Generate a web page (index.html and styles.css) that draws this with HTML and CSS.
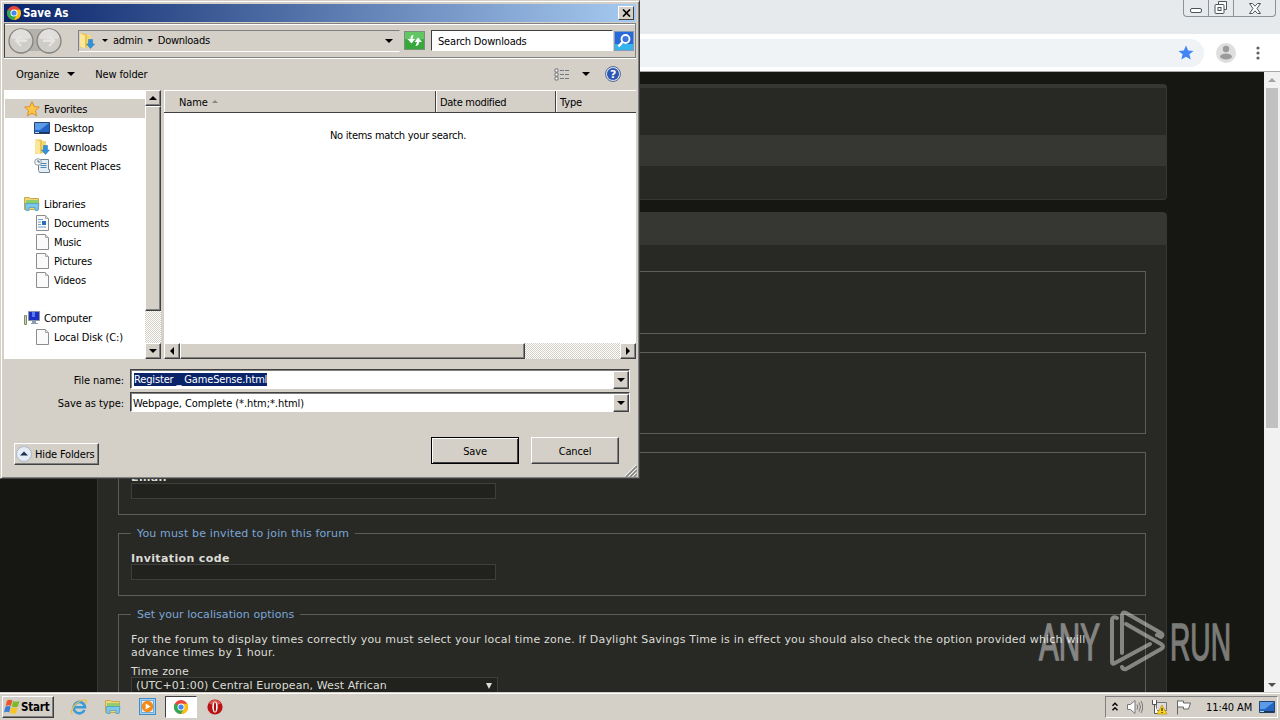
FILE: index.html
```html
<!DOCTYPE html>
<html lang="en">
<head>
  <meta charset="UTF-8">
  <title>Register / GameSense</title>
  <link rel="stylesheet" href="styles.css">
</head>
<body>
  <svg class="defs" width="0" height="0">
    <symbol id="chrome" viewBox="0 0 16 16">
      <circle cx="8" cy="8" r="7" fill="#e9453a"/>
      <path d="M8 8 1.9 4.6A7 7 0 0 0 8 15l3.2-5.5z" fill="#2da94f"/>
      <path d="M8 4.8h6.2A7 7 0 0 1 8 15l3-5.4z" fill="#fdc10a"/>
      <circle cx="8" cy="8" r="3.5" fill="#fff"/>
      <circle cx="8" cy="8" r="2.6" fill="#4387f3"/>
    </symbol>
    <symbol id="downloads" viewBox="0 0 16 16">
      <path d="M1 .5h6l2 2v12H1z" fill="#e8c656"/>
      <path d="M1 .5l5 2V15.500L1 13.500z" fill="#fbe797"/>
      <path d="M8 2h4v12H8z" fill="#f3d774"/>
      <path d="M9.500 6.500h4V11h2L11.500 15.500 7.500 11h2z" fill="#2f93dd" stroke="#2273b5" stroke-width=".5"/>
    </symbol>
    <symbol id="page" viewBox="0 0 16 16">
      <path d="M2.500.500h9l3 3v12h-12z" fill="#fafafa" stroke="#8c8c8c"/>
      <path d="M11.500.500v3h3" fill="#ddd" stroke="#aaa"/>
    </symbol>
    <symbol id="library" viewBox="0 0 16 16">
      <path d="M.5 1.500h5l1 1h8v11H.5z" fill="#f2d675" stroke="#c9a94b"/>
      <path d="M2 4h12v4H2z" fill="#8fce6b"/>
      <path d="M1 7.500h14l-1 7h-3v-3H5v3H2z" fill="#7cc7ea" stroke="#4698c4" stroke-width=".7"/>
    </symbol>
    <symbol id="screen" viewBox="0 0 16 16">
      <path d="M.5 2.500h15v11H.5z" fill="#2265c4" stroke="#26456f"/>
      <path d="M1 3h14L6 10H1z" fill="#5a9bea"/>
      <path d="M1 12h14v1.500H1z" fill="#1d3555"/>
      <path d="M1 12h4v1H1z" fill="#a8d8ea"/>
    </symbol>
  </svg>

  <div class="desktop">
    <div class="browser">
      <div class="tabstrip">
        <div class="win-buttons">
          <span><svg width="12" height="5" viewBox="0 0 12 5"><rect x=".5" y=".5" width="11" height="4" rx="1.500" class="line"/></svg></span>
          <span><svg width="14" height="14" viewBox="0 0 14 14"><path d="M4.500 3V.5h8v8H10" class="line"/><rect x="1" y="3.500" width="9" height="9" rx="1" class="line"/><rect x="4" y="6.500" width="3" height="3" class="line"/></svg></span>
          <span class="wide"><svg width="12" height="11" viewBox="0 0 12 11"><path d="M.5.500h3L6 3.200 8.500.500h3L8 5.500l3.500 5h-3L6 7.800l-2.500 2.700h-3L4 5.500z" class="line"/></svg></span>
        </div>
      </div>
      <div class="toolbar">
        <div class="omnibox">
          <svg width="16" height="16" viewBox="0 0 16 16"><path d="M8 .5l2.200 5 5.300.4-4.100 3.400 1.300 5.300L8 11.800l-4.700 2.800 1.300-5.300L.5 5.900l5.300-.4z" fill="#4285f4"/></svg>
        </div>
        <svg width="20" height="20" viewBox="0 0 20 20"><circle cx="10" cy="10" r="10" fill="#dedede"/><circle cx="10" cy="6" r="3.200" fill="#9b9b9b"/><ellipse cx="10" cy="13.500" rx="6" ry="3" fill="#9b9b9b"/></svg>
        <svg width="4" height="14" viewBox="0 0 4 14" fill="#5f6368"><circle cx="2" cy="2" r="1.600"/><circle cx="2" cy="7" r="1.600"/><circle cx="2" cy="12" r="1.600"/></svg>
      </div>
      <div class="viewport">
        <div class="page">
          <div class="panel top-panel">
            <div class="nav-strip"></div>
          </div>
          <div class="panel form-panel">
            <div class="panel-head"></div>
            <div class="fields">
              <fieldset></fieldset>
              <fieldset class="tall"></fieldset>
              <fieldset>
                <label class="req">Email<input type="text"></label>
              </fieldset>
              <fieldset>
                <legend>You must be invited to join this forum</legend>
                <label class="req">Invitation code<input type="text"></label>
              </fieldset>
              <fieldset class="last">
                <legend class="tight">Set your localisation options</legend>
                <p>For the forum to display times correctly you must select your local time zone. If Daylight Savings Time is in effect you should also check the option provided which will<br>advance times by 1 hour.</p>
                <div class="tz-label">Time zone</div>
                <div class="select"><span>(UTC+01:00) Central European, West African</span><i></i></div>
              </fieldset>
            </div>
          </div>
        </div>
        <div class="scrollbar">
          <i class="arrow-up"></i>
          <div class="thumb"></div>
          <i class="arrow-down"></i>
        </div>
      </div>
    </div>

    <div class="taskbar">
      <button class="start">
        <svg width="16" height="16" viewBox="0 0 16 16"><path d="M3 1.500c2-1.300 3.500-1 5.500 0L6.800 7C5 6 3.500 6 1.700 7z" fill="#e8572a"/><path d="M9.200 2c2 1 3.800 1 6.300 0L13.900 7.500c-2 1-4 .8-6.200-.1z" fill="#7cb82f"/><path d="M1.400 7.700c2-1 3.500-1 5.200 0L5.200 13.500C3.500 12.500 2 12.500 0 13.500z" fill="#3b7fd4"/><path d="M7.400 8.200c2 1 4 1 6.200.1L12.200 14c-2 1-4 1-6.200 0z" fill="#f7c51e"/></svg>
        <b>Start</b>
      </button>
      <div class="launch">
        <span><svg width="18" height="18" viewBox="0 0 18 18" fill="none"><path d="M14.500 12A5.700 5.700 0 1 1 15 9.300H5" stroke="#3a9bdc" stroke-width="2.600"/><path d="M2.500 16C-1 15 4 5 11.500 2.500 16 1 17.500 2.500 15.800 5.500" stroke="#f0bf3a" stroke-width="1.300"/></svg></span>
        <span><svg width="16" height="16"><use href="#library"/></svg></span>
        <span><svg width="17" height="17" viewBox="0 0 17 17"><rect x=".5" y=".5" width="16" height="16" fill="#a9d1ef" stroke="#3e8ccc"/><rect x="2.500" y="2.500" width="12" height="12" fill="#e4eff7" stroke="#73acd8"/><circle cx="8.500" cy="8.500" r="5.700" fill="#f58a16"/><path d="M6.700 5.500v6l4.800-3z" fill="#fff"/></svg></span>
        <span class="active"><svg width="16" height="16"><use href="#chrome"/></svg></span>
        <span><svg width="16" height="16" viewBox="0 0 16 16"><circle cx="8" cy="8" r="7.600" fill="#b81414"/><path d="M2 4.500a7 7 0 0 1 12 0Q8 7 2 4.500" fill="#e05a55"/><ellipse cx="8" cy="8" rx="2.700" ry="5.500" fill="#fff"/><ellipse cx="8" cy="8" rx="1.100" ry="4.700" fill="#a81010"/></svg></span>
      </div>
      <div class="tray">
        <svg width="8" height="10" viewBox="0 0 8 10" fill="none" stroke="#000" stroke-width="1.400"><path d="M1.500 3.700 4 1.200l2.500 2.500M1.500 8.200 4 5.700l2.500 2.500"/></svg>
        <svg width="16" height="16" viewBox="0 0 16 16" fill="none" stroke="#777"><path d="M.5 5.500h3L8 1.500v13L3.500 10.500h-3z" fill="#fff"/><path d="M10 5.500q1.500 2.500 0 5M12 3.500q3 4.500 0 9M14 2q3.500 6 0 12"/></svg>
        <svg width="17" height="16" viewBox="0 0 17 16"><path d="M5.500 3.500h10v8h-10z" fill="#ddd" stroke="#777"/><path d="M1.500 1v4.500h4V1M3.500 5.500v9h4" fill="#fff" stroke="#555"/><path d="M11 6l5 9H6z" fill="#ffd51e" stroke="#b99000" stroke-width=".7"/><path d="M11 9v3M11 13v1" stroke="#000"/></svg>
        <svg width="16" height="16" viewBox="0 0 16 16"><path d="M1.500 1.500v14M1.500 2h6v2h7l-2 6h-5v-2h-6" fill="#fff" stroke="#666"/></svg>
        <span class="clock">11:40 AM</span>
        <svg width="16" height="16"><use href="#screen"/></svg>
      </div>
    </div>

    <div class="dialog">
      <div class="titlebar">
        <svg width="16" height="16"><use href="#chrome"/></svg>
        <b>Save As</b>
        <button class="close"><svg width="9" height="8" viewBox="0 0 9 8"><path d="M1 .5l7 7M8 .5l-7 7" stroke="#000" stroke-width="1.700"/></svg></button>
      </div>
      <div class="addressbar">
        <svg class="history" width="56" height="28" viewBox="0 0 56 28">
          <path d="M14 2h28v22H14z" fill="#b5b2ab"/>
          <g fill="#cfcdc8" stroke="#85837e" stroke-width="1.300"><circle cx="14" cy="14" r="12"/><circle cx="42" cy="14" r="12"/></g>
          <path d="M4 11a10 9 0 0 1 20 0q-10 4-20 0M32 11a10 9 0 0 1 20 0q-10 4-20 0" fill="#e0dfdc"/>
          <path d="M20 14H9m5-5-5 5 5 5M36 14h11m-5-5 5 5-5 5" fill="none" stroke="#e6e5e2" stroke-width="2"/>
        </svg>
        <div class="crumbs">
          <svg width="16" height="16"><use href="#downloads"/></svg>
          <i class="tri small"></i><span>admin</span>
          <i class="tri small"></i><span>Downloads</span>
          <i class="tri end"></i>
        </div>
        <svg class="refresh" width="21" height="19" viewBox="0 0 21 19"><rect x=".5" y=".5" width="20" height="18" fill="#35a93a" stroke="#78917a"/><path d="M1 1h19v7Q10 10 1 8z" fill="#62c664"/><path d="M9.500 4q-3 0-3 4H3.500l4 4.500L11 8H8.500M11.500 15q3.500 0 3.500-4h3l-4-4.500L10.500 11H13" fill="#fff"/></svg>
        <div class="search">Search Downloads</div>
        <svg class="go" width="20" height="20" viewBox="0 0 20 20"><rect x=".5" y=".5" width="19" height="19" fill="#2769d8" stroke="#8599b8"/><path d="M1 13h18v6H1z" fill="#35b5ec"/><circle cx="11.500" cy="8" r="4" fill="#3f76dc" stroke="#fff" stroke-width="1.800"/><path d="M8.500 11 4.500 15.500" stroke="#fff" stroke-width="2.400"/></svg>
      </div>
      <div class="commands">
        <span>Organize</span><i class="tri"></i>
        <span class="new">New folder</span>
        <svg class="views" width="16" height="13" viewBox="0 0 16 13"><g fill="#fff" stroke="#777"><path d="M1 1h3v3H1zM1 5h3v3H1zM1 9h3v3H1z"/></g><path d="M6 2.500h4m1 0h4M6 6.500h4m1 0h4M6 10.500h4m1 0h4" stroke="#70788a"/></svg>
        <i class="tri"></i>
        <svg class="help" width="16" height="16" viewBox="0 0 16 16"><circle cx="8" cy="8" r="7.500" fill="#d8dfef" stroke="#5a6a92"/><circle cx="8" cy="8" r="6" fill="#2c55b4"/><text x="8" y="12" text-anchor="middle">?</text></svg>
      </div>
      <div class="explorer">
        <div class="tree">
          <div class="row root selected"><svg width="16" height="16" viewBox="0 0 16 16"><path d="M8 .7l2.200 4.800 5.200.6-3.900 3.500 1.100 5.300L8 12.200l-4.600 2.700 1.100-5.300L.6 6.100l5.200-.6z" fill="#fbc646" stroke="#d78a25" stroke-width=".9"/></svg><span>Favorites</span></div>
          <div class="row"><svg width="16" height="16"><use href="#screen"/></svg><span>Desktop</span></div>
          <div class="row"><svg width="16" height="16"><use href="#downloads"/></svg><span>Downloads</span></div>
          <div class="row"><svg width="16" height="16" viewBox="0 0 16 16"><path d="M4.500 1.500h10v10h1v3H5.500l-1-2z" fill="#e5eef4" stroke="#71828e"/><path d="M6.500 5.500h6m-6 2h6m-6 2h6" stroke="#4d87b4"/><circle cx="4" cy="4" r="3.300" fill="#f4f7f9" stroke="#8c9aa4"/><path d="M4 2v2h2" fill="none" stroke="#4a6172"/></svg><span>Recent Places</span></div>
          <div class="row root spaced"><svg width="16" height="16"><use href="#library"/></svg><span>Libraries</span></div>
          <div class="row"><svg width="16" height="16" viewBox="0 0 16 16"><use href="#page"/><path d="M4 4.500h5M4 7h3m-3 2.500h3M4 12h8" stroke="#6f9fd0"/><path d="M8 6h4v4H8z" fill="#2b6fb4"/></svg><span>Documents</span></div>
          <div class="row"><svg width="16" height="16"><use href="#page"/></svg><span>Music</span></div>
          <div class="row"><svg width="16" height="16"><use href="#page"/></svg><span>Pictures</span></div>
          <div class="row"><svg width="16" height="16"><use href="#page"/></svg><span>Videos</span></div>
          <div class="row root spaced"><svg width="16" height="16" viewBox="0 0 16 16"><path d="M4.500 1.500h11v9h-11z" fill="#1c2fc0" stroke="#8d95ab"/><path d="M8 2h3v5H8z" fill="#5b78ef"/><path d="M8 11h4v2h2v1H7v-1h1z" fill="#8d9db5"/><path d="M.5 5.500h2v9h-2z" fill="#c8d6a0" stroke="#7c8b6b"/></svg><span>Computer</span></div>
          <div class="row"><svg width="16" height="16"><use href="#page"/></svg><span>Local Disk (C:)</span></div>
        </div>
        <div class="vscroll">
          <div class="btn"><i class="tri up"></i></div>
          <div class="bar"></div>
          <div class="track"></div>
          <div class="btn"><i class="tri"></i></div>
        </div>
        <div class="files">
          <div class="columns">
            <span class="name">Name <i class="tri up sort"></i></span><span class="date">Date modified</span><span>Type</span>
          </div>
          <div class="empty">No items match your search.</div>
          <div class="hscroll">
            <div class="btn"><i class="tri left"></i></div>
            <div class="bar"></div>
            <div class="track"></div>
            <div class="btn"><i class="tri right"></i></div>
          </div>
        </div>
      </div>
      <div class="inputs">
        <label>File name:</label>
        <div class="combo"><span class="marked">Register _ GameSense.html</span><div class="btn"><i class="tri"></i></div></div>
        <label>Save as type:</label>
        <div class="combo type"><span>Webpage, Complete (*.htm;*.html)</span><div class="btn"><i class="tri"></i></div></div>
      </div>
      <div class="actions">
        <button class="hide"><svg width="16" height="16" viewBox="0 0 16 16"><circle cx="8" cy="8" r="7.500" fill="#e4edf5" stroke="#aab8c6"/><path d="M4 9.500 8 5.500l4 4z" fill="#1f3050"/></svg>Hide Folders</button>
        <button class="default">Save</button>
        <button>Cancel</button>
      </div>
      <svg class="grip" width="12" height="12" viewBox="0 0 12 12"><path d="M1 12 12 1M5 12l7-7M9 12l3-3" stroke="#808080" stroke-width="1.500"/><path d="M0 11 11 0M4 11l7-7M8 11l3-3" stroke="#fff" stroke-width=".8"/></svg>
    </div>

    <svg class="watermark" width="200" height="64" viewBox="0 0 200 64">
      <text x="1" y="50.500" textLength="61" lengthAdjust="spacingAndGlyphs">ANY</text>
      <g fill="none" stroke-width="4" stroke-linecap="round" stroke-linejoin="round">
        <path d="M79 9q-5-2-5 2v42q0 3 3 1L112 35"/>
        <path d="M84 44V7q0-5 4-3l35 20q3 2 0 4l-4-2"/>
        <path d="M88 15l35 20q4 2.500 0 5L88 60q-3 1-4-2"/>
      </g>
      <text x="132" y="50.500" textLength="61" lengthAdjust="spacingAndGlyphs">RUN</text>
    </svg>
  </div>
</body>
</html>
```
FILE: styles.css
```css
* { box-sizing: border-box; }
body { margin: 0; font: 11px/13px "DejaVu Sans Condensed", "DejaVu Sans", sans-serif; font-stretch: condensed; color: #000; overflow: hidden; }
button { font: inherit; color: inherit; letter-spacing: inherit; padding: 0; }
svg { display: block; flex: none; }
.defs { position: absolute; }
.desktop { position: relative; width: 1280px; height: 720px; display: flex; flex-direction: column; overflow: hidden; }

/* browser */
.browser { height: 692px; display: flex; flex-direction: column; overflow: hidden; }
.tabstrip { height: 34px; background: #e6eaed; display: flex; justify-content: flex-end; padding-right: 4px; }
.win-buttons { display: flex; height: 17px; border: 1px solid #8b9298; border-top: 0; border-radius: 0 0 4px 4px; }
.win-buttons span { width: 25px; display: flex; justify-content: center; align-items: center; border-right: 1px solid #8b9298; }
.win-buttons span:first-child { align-items: flex-end; padding-bottom: 3px; }
.win-buttons .wide { width: 41px; border-right: 0; }
.line { fill: #fff; stroke: #4c5359; }
.toolbar { height: 38px; background: #fff; border-bottom: 1px solid #a8a9aa; display: flex; align-items: center; padding-right: 20px; gap: 20px; }
.omnibox { flex: 1; height: 28px; margin-right: -8px; background: #eff3f6; border-radius: 0 14px 14px 0; display: flex; align-items: center; justify-content: flex-end; padding-right: 10px; }
.viewport { height: 620px; display: flex; background: #161712; }
.page { flex: 1; padding: 12px 97px 0; display: flex; flex-direction: column; gap: 12px; font: 11px/13px "DejaVu Sans", sans-serif; font-stretch: normal; color: #dcdcd6; overflow: hidden; }
.panel { background: #282925; border: 1px solid #363733; border-radius: 4px; }
.top-panel { height: 116px; border-top-width: 4px; padding-top: 47px; flex: none; }
.nav-strip { height: 31px; background: #363733; }
.form-panel { flex: none; height: 520px; }
.panel-head { height: 32px; background: #363733; }
.fields { padding: 26px 20px 0; display: flex; flex-direction: column; gap: 18px; }
fieldset { margin: 0; min-width: 0; height: 63px; padding: 18px 12px 0; border: 1px solid #5d5e59; }
fieldset.tall { height: 82px; }
fieldset.last { height: 120px; }
legend { height: 1px; line-height: 2px; padding: 0 6px; color: #7ba6d8; letter-spacing: .15px; }
legend.tight { letter-spacing: .04px; }
.req { display: block; font-weight: bold; letter-spacing: .37px; }
input { display: block; width: 365px; height: 16px; margin: -1px 0 0; padding: 0; background: #21221d; border: 1px solid #3e3f3b; }
fieldset p { margin: 0 0 6px; white-space: nowrap; letter-spacing: .205px; }
.tz-label { margin-bottom: -1px; letter-spacing: .15px; }
.select { width: 367px; height: 17px; display: flex; align-items: center; justify-content: space-between; padding: 0 5px 0 4px; background: #21221d; border: 1px solid #3e3f3b; letter-spacing: .1px; }
.select i { border: 3.5px solid transparent; border-top: 6px solid #dcdcd6; border-bottom: 0; }
.scrollbar { width: 16px; background: #f1f1f1; display: flex; flex-direction: column; align-items: center; padding: 6px 0 5px; }
.arrow-up { border: 4px solid transparent; border-top: 0; border-bottom: 4px solid #a3a3a3; }
.arrow-down { border: 4px solid transparent; border-bottom: 0; border-top: 4px solid #505050; margin-top: auto; }
.thumb { width: 12px; height: 340px; margin-top: 6px; background: #c1c1c1; }

/* taskbar */
.taskbar { height: 28px; background: #d4d0c8; border-top: 1px solid #d4d0c8; box-shadow: inset 0 1px #fff; display: flex; align-items: center; padding: 2px 2px 2px; }
.start { width: 52px; height: 22px; display: flex; align-items: center; gap: 1px; padding-left: 1px; background: #d4d0c8; border: 1px solid; border-color: #fff #404040 #404040 #fff; box-shadow: inset -1px -1px #808080; }
.start b { font-size: 11.5px; letter-spacing: -.2px; padding-top: 1px; }
.launch { display: flex; margin-left: 9px; }
.launch span { width: 32px; height: 22px; margin-right: 2px; display: flex; align-items: center; justify-content: center; }
.launch .active { background: #fff; border: 1px solid; border-color: #404040 #fff #fff #404040; }
.tray { margin-left: auto; width: 173px; height: 22px; display: flex; align-items: center; gap: 8px; padding: 0 4px 0 5px; border: 1px solid; border-color: #808080 #fff #fff #808080; }
.clock { margin: 0 -1px 0 6px; padding-top: 1px; white-space: nowrap; letter-spacing: -.1px; }

/* save dialog */
.dialog { position: absolute; left: 0; top: 0; width: 640px; height: 479px; background: #d4d0c8; border: 1px solid; border-color: #d4d0c8 #404040 #404040 #d4d0c8; box-shadow: inset 1px 1px #fff, inset -1px -1px #808080; padding: 3px 3px 0; white-space: nowrap; letter-spacing: -.15px; }
.titlebar { height: 18px; display: flex; align-items: center; padding: 0 2px; gap: 1px; color: #fff; background: linear-gradient(90deg, #0a246a, #a6caf0); }
.titlebar b { font-size: 11.5px; letter-spacing: -.1px; }
.close { margin-left: auto; width: 16px; height: 14px; display: grid; place-items: center; background: #d4d0c8; border: 1px solid; border-color: #fff #404040 #404040 #fff; }
.tri { flex: none; border: 4px solid transparent; border-top: 4px solid #000; border-bottom: 0; }
.tri.small { border-width: 3px 3px 0; }
.tri.up { border-top: 0; border-bottom: 4px solid #000; }
.tri.left { border: 4px solid transparent; border-left: 0; border-right: 4px solid #000; }
.tri.right { border: 4px solid transparent; border-right: 0; border-left: 4px solid #000; }
.addressbar { height: 35px; margin-top: 1px; border: 1px solid; border-color: #808080 #808080 #808080 #404040; box-shadow: 0 1px #fff, inset 0 1px #fff; display: flex; align-items: center; padding-left: 2px; }
.crumbs { width: 322px; height: 22px; margin-left: 15px; display: flex; align-items: center; border: 1px solid; border-color: #808080 #d4d0c8 #fff #808080; letter-spacing: -.25px; }
.crumbs .small { margin: 0 5px 0 4px; }
.crumbs svg + .small { margin-left: 7px; }
.crumbs .end { margin-left: auto; margin-right: 6px; }
.refresh { margin-left: 4px; }
.search { width: 182px; height: 21px; margin-left: 6px; padding: 4px 6px 2px; background: #fff; border: 1px solid; border-color: #404040 #fff #fff #404040; letter-spacing: -.18px; }
.go { margin-left: 1px; }
.commands { height: 32px; display: flex; align-items: center; padding-left: 12px; }
.commands .tri { margin-left: 8px; }
.commands .new { margin-left: 20px; letter-spacing: -.1px; }
.commands .views { margin-left: auto; }
.commands .views + .tri { margin-left: 12px; }
.help { margin: 0 15px; }
.help text { font: bold 11px "DejaVu Sans", sans-serif; fill: #fff; }
.explorer { height: 269px; display: flex; }
.tree { width: 141px; padding: 9px 0 0 1px; background: #fff; }
.row { height: 19px; display: flex; align-items: center; gap: 4px; padding-left: 29px; }
.row span { padding-top: 2px; }
.row.root { padding-left: 19px; }
.selected { background: #d4d0c8; }
.spaced { margin-top: 19px; }
.btn { width: 16px; height: 16px; flex: none; display: grid; place-items: center; background: #d4d0c8; border: 1px solid; border-color: #fff #404040 #404040 #fff; box-shadow: inset -1px -1px #808080; }
.bar { background: #d4d0c8; border: 1px solid; border-color: #fff #404040 #404040 #fff; box-shadow: inset -1px -1px #808080; }
.track { flex: 1; background: repeating-conic-gradient(#fff 0 25%, #d4d0c8 0 50%) 0 0 / 2px 2px; }
.vscroll { width: 16px; display: flex; flex-direction: column; }
.vscroll .bar { height: 205px; }
.files { flex: 1; margin-left: 3px; background: #fff; display: flex; flex-direction: column; }
.columns { height: 23px; display: flex; background: #d4d0c8; border-bottom: 1px solid #404040; border-top: 1px solid #fff; }
.columns span { padding: 5px 0 0 3px; border-left: 1px solid #fff; }
.columns .name { width: 272px; padding-left: 14px; border-right: 1px solid #404040; }
.columns .date { width: 120px; border-right: 1px solid #404040; letter-spacing: -.3px; }
.sort { display: inline-block; vertical-align: 3px; margin-left: 1px; }
.tri.sort { border-width: 0 3px 3px; border-bottom-color: #8a8680; }
.empty { flex: 1; padding-top: 16px; text-align: center; padding-right: 4px; letter-spacing: -.26px; }
.hscroll { display: flex; height: 16px; }
.hscroll .bar { width: 345px; }
.inputs { display: grid; grid-template-columns: 120px 500px; column-gap: 6px; row-gap: 3px; margin-top: 10px; align-items: center; }
.inputs label { text-align: right; padding-top: 2px; letter-spacing: -.08px; }
.combo { height: 20px; display: flex; align-items: center; background: #fff; border: 1px solid; border-color: #404040 #fff #fff #404040; box-shadow: inset 1px 1px #808080; padding: 1px 0 0 2px; }
.combo .btn { margin-left: auto; height: 18px; }
.combo.type span { padding-top: 2px; letter-spacing: -.06px; }
.marked { margin-left: 1px; background: #0a246a; color: #fff; }
.actions { display: flex; margin-top: 25px; padding-left: 10px; }
.actions button { width: 88px; height: 27px; margin-left: 12px; padding-top: 1px; background: #d4d0c8; border: 1px solid; border-color: #fff #404040 #404040 #fff; box-shadow: inset -1px -1px #808080; }
.actions .default { margin-left: 332px; border-color: #000; box-shadow: inset 1px 1px #fff, inset -1px -1px #404040; }
.actions .hide { width: 85px; height: 22px; margin: 6px 0 0; display: flex; align-items: center; gap: 3px; padding: 0 0 0 1px; }
.grip { position: absolute; right: 2px; bottom: 1px; }

.watermark { position: absolute; left: 1038px; top: 609px; fill: #fff; stroke: #fff; opacity: .43; }
.watermark text { font: 52px "Liberation Sans Narrow", "Liberation Sans", sans-serif; stroke-width: 1.3px; }
```
